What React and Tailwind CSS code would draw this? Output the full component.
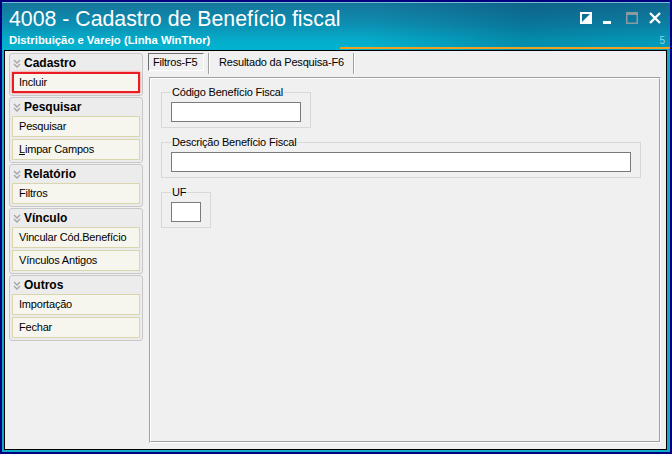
const FONT = "font-['Liberation_Sans',Arial,sans-serif]";

// Double chevron shown at the left of each sidebar group header
function Chevrons() {
  return (
    <svg width="8" height="9" viewBox="0 0 8 9" className="shrink-0">
      <path d="M1 1 L4 4 L7 1" fill="none" stroke="#a4a4a4" strokeWidth="1.3" />
      <path d="M1 5 L4 8 L7 5" fill="none" stroke="#a4a4a4" strokeWidth="1.3" />
    </svg>
  );
}

function SideItem({ children, active }) {
  return (
    <div
      className={
        active
          ? "h-[21px] border-2 border-[#ea1c24] shadow-[0_0_2px_#ff6060] bg-[#f6f6ee] pl-[5px] flex items-center text-[11px] tracking-[-0.2px] text-black"
          : "h-[21px] border border-[#d9d6ae] bg-[#f6f6ee] pl-[6px] flex items-center text-[11px] tracking-[-0.2px] text-black"
      }
    >
      {children}
    </div>
  );
}

function SideGroup({ title, children }) {
  return (
    <div className="rounded-[3px] border border-[#c8c8c8] bg-[#ececec] px-[2px] pb-[2px]">
      <div className="h-[18px] flex items-center gap-[3px] pl-[1px] text-[12px] font-bold text-black">
        <Chevrons />
        <span>{title}</span>
      </div>
      <div className="flex flex-col gap-[2px]">{children}</div>
    </div>
  );
}

function GroupBox({ label, boxClass, inputClass }) {
  return (
    <div className={"relative border border-[#d8d8d8] pt-[9px] pl-[9px] pb-[5px] " + boxClass}>
      <span className="absolute left-[9px] -top-[7px] bg-[#f0f0f0] px-[1px] leading-[13px] text-[11px] tracking-[-0.2px] text-black">
        {label}
      </span>
      <div className={"h-[20px] border border-[#7a7a7a] bg-white " + inputClass} />
    </div>
  );
}

export default function App() {
  return (
    <div className={"w-[672px] h-[454px] bg-[#00007e] p-[2px] " + FONT}>
      <div className="w-full h-full flex flex-col bg-[#12a9c8]">
        {/* Title bar */}
        <div className="relative h-[48px] shrink-0 flex justify-between overflow-hidden border-t border-[#6fbfd6] bg-[linear-gradient(180deg,#15759a_0%,#0d8fb2_45%,#04adcb_80%,#02b4d0_100%)]">
          <div className="absolute inset-0 bg-[linear-gradient(105deg,transparent_55%,rgba(0,50,90,0.28)_78%,rgba(0,40,80,0.15)_100%)]" />
          <div className="relative pl-[7px] pt-[4px] flex flex-col text-white">
            <div className="text-[21.3px] leading-[24px]">4008 - Cadastro de Benefício fiscal</div>
            <div className="mt-[3px] text-[11.3px] leading-[13px] font-bold">
              Distribuição e Varejo (Linha WinThor)
            </div>
          </div>
          <div className="relative flex items-start gap-[11px] pt-[9px] pr-[9px]">
            {/* size toggle */}
            <svg width="12" height="12" viewBox="0 0 12 12">
              <rect x="1" y="1" width="10" height="10" fill="none" stroke="#fff" strokeWidth="2" />
              <polygon points="0,12 12,0 12,12" fill="#fff" />
            </svg>
            {/* minimize */}
            <svg width="8" height="12" viewBox="0 0 8 12">
              <rect x="0" y="9" width="8" height="3" fill="#fff" />
            </svg>
            {/* maximize (disabled) */}
            <svg width="12" height="12" viewBox="0 0 12 12" className="ml-[4px]">
              <rect x="0.75" y="0.75" width="10.5" height="10.5" fill="none" stroke="#8c9aa2" strokeWidth="1.5" />
              <rect x="0" y="0" width="12" height="3" fill="#8c9aa2" />
            </svg>
            {/* close */}
            <svg width="12" height="12" viewBox="0 0 12 12">
              <path d="M1 1 L11 11 M11 1 L1 11" stroke="#fff" strokeWidth="2.4" />
            </svg>
          </div>
          <span className="absolute right-[5px] top-[32px] text-[10px] leading-[12px] text-[#8fd6e8]">5</span>
          <div className="absolute left-[338px] right-[0px] bottom-[1px] h-[2px] bg-[#eea11c]" />
        </div>

        {/* Window body */}
        <div className="flex-1 flex pl-[2px] pr-[3px] pb-[2px]">
          <div className="flex-1 flex border border-black bg-[#f0f0f0]">
            {/* Sidebar */}
            <div className="w-[134px] ml-[4px] mt-[2px] flex flex-col gap-[1px] self-start">
              <SideGroup title="Cadastro">
                <SideItem active>Incluir</SideItem>
              </SideGroup>
              <SideGroup title="Pesquisar">
                <SideItem>Pesquisar</SideItem>
                <SideItem>
                  <span>
                    <span className="underline">L</span>impar Campos
                  </span>
                </SideItem>
              </SideGroup>
              <SideGroup title="Relatório">
                <SideItem>Filtros</SideItem>
              </SideGroup>
              <SideGroup title="Vínculo">
                <SideItem>Vincular Cód.Benefício</SideItem>
                <SideItem>Vínculos Antigos</SideItem>
              </SideGroup>
              <SideGroup title="Outros">
                <SideItem>Importação</SideItem>
                <SideItem>Fechar</SideItem>
              </SideGroup>
            </div>

            {/* Tabs + filter page */}
            <div className="flex-1 ml-[5px] mr-[5px] mt-[1px] mb-[6px] flex flex-col">
              <div className="h-[25px] shrink-0 flex items-start text-[11px] tracking-[-0.2px] text-black">
                <div className="mt-[1px] h-[18px] w-[56px] flex items-center pl-[4px] border border-t-[#6e6e6e] border-l-[#6e6e6e] border-r-white border-b-white">
                  Filtros-F5
                </div>
                <div className="ml-[4px] mt-[1px] w-[2px] h-[21px] border-l border-[#a0a0a0] border-r border-r-white" />
                <div className="h-[20px] flex items-center px-[9px]">Resultado da Pesquisa-F6</div>
                <div className="mt-[1px] w-[2px] h-[21px] border-l border-[#a0a0a0] border-r border-r-white" />
              </div>
              <div className="flex-1 ml-[1px] flex border border-t-[#a0a0a0] border-l-[#a0a0a0] border-r-white border-b-white">
                <div className="flex-1 border border-t-white border-l-white border-r-[#a0a0a0] border-b-[#a0a0a0] pl-[10px] pt-[13px] flex flex-col items-start gap-[14px]">
                  <GroupBox label="Código Benefício Fiscal" boxClass="w-[150px]" inputClass="w-[130px]" />
                  <GroupBox label="Descrição Benefício Fiscal" boxClass="w-[480px]" inputClass="w-[460px]" />
                  <GroupBox label="UF" boxClass="w-[50px]" inputClass="w-[30px]" />
                </div>
              </div>
            </div>
          </div>
        </div>
      </div>
    </div>
  );
}
